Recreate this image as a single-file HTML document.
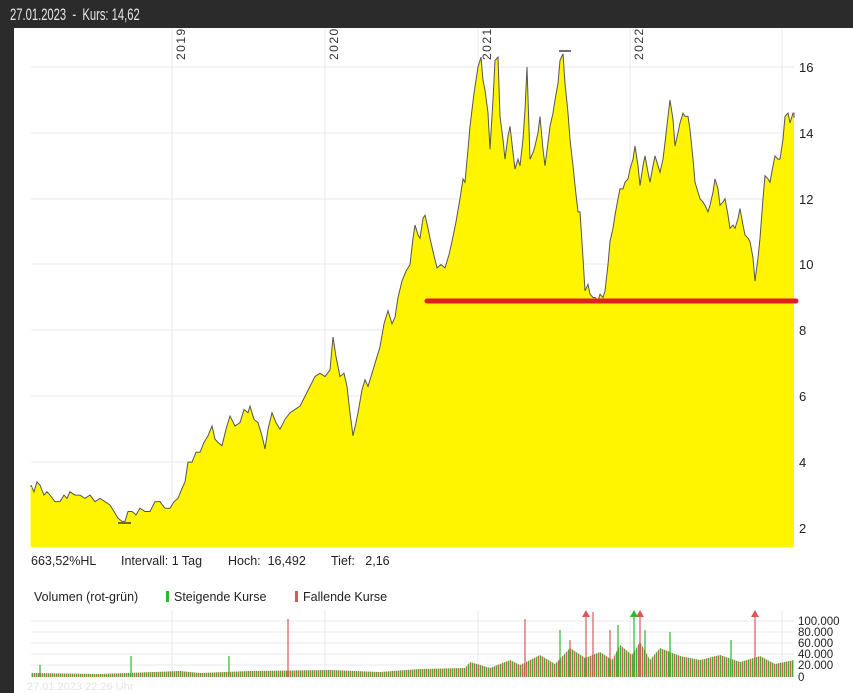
<!DOCTYPE html>
<html><head><meta charset="utf-8"><style>
html,body{margin:0;padding:0;width:853px;height:693px;overflow:hidden;background:#2b2b2b;font-family:"Liberation Sans",sans-serif}
.top{position:absolute;left:10px;top:0;height:28px;color:#e6e6e6;font-size:17px;line-height:30px;transform:scaleX(0.66);transform-origin:0 0;white-space:nowrap}
.panel{position:absolute;left:14px;top:28px;width:839px;height:665px;background:#fff}
svg{position:absolute;left:0;top:0}
</style></head><body>
<div class="top">27.01.2023&nbsp; - &nbsp;Kurs: 14,62</div>
<div class="panel"></div>
<svg width="853" height="693" viewBox="0 0 853 693" font-family="Liberation Sans, sans-serif">
<defs>
<pattern id="vp" width="4" height="10" patternUnits="userSpaceOnUse">
<rect x="0" y="0" width="1.4" height="10" fill="#2db82d"/>
<rect x="2" y="0" width="1.4" height="10" fill="#d9595b"/>
</pattern>
</defs>
<g stroke="#eaeaea" stroke-width="1">
<line x1="31" y1="67" x2="794" y2="67"/><line x1="31" y1="133" x2="794" y2="133"/><line x1="31" y1="199" x2="794" y2="199"/><line x1="31" y1="264" x2="794" y2="264"/><line x1="31" y1="330" x2="794" y2="330"/><line x1="31" y1="396" x2="794" y2="396"/><line x1="31" y1="462" x2="794" y2="462"/><line x1="31" y1="528" x2="794" y2="528"/>
<line x1="172" y1="28" x2="172" y2="547"/><line x1="325" y1="28" x2="325" y2="547"/><line x1="478" y1="28" x2="478" y2="547"/><line x1="630" y1="28" x2="630" y2="547"/><line x1="782" y1="28" x2="782" y2="547"/>
<line x1="31" y1="621" x2="794" y2="621"/><line x1="31" y1="632" x2="794" y2="632"/><line x1="31" y1="643" x2="794" y2="643"/><line x1="31" y1="654" x2="794" y2="654"/><line x1="31" y1="665" x2="794" y2="665"/>
<line x1="172" y1="610" x2="172" y2="677"/><line x1="325" y1="610" x2="325" y2="677"/><line x1="478" y1="610" x2="478" y2="677"/><line x1="630" y1="610" x2="630" y2="677"/><line x1="782" y1="610" x2="782" y2="677"/>
</g>
<g transform="matrix(1 0 0 -32.93 0 593.86)">
<polygon fill="#fff500" stroke="#555" stroke-width="1" vector-effect="non-scaling-stroke" points="31,1.4 31,3.3 34,3.1 37,3.4 40,3.3 44,3.0 47,3.1 50,3.0 55,2.8 60,2.8 64,3.0 67,2.9 70,3.1 75,3.0 80,3.0 85,2.9 90,3.0 95,2.8 100,2.9 105,2.8 110,2.7 114,2.5 118,2.3 122,2.2 125,2.2 128,2.5 132,2.5 136,2.4 140,2.6 145,2.5 150,2.5 155,2.8 160,2.8 165,2.6 170,2.6 174,2.8 178,2.9 182,3.2 185,3.4 188,4.0 192,4.0 196,4.3 200,4.3 204,4.6 208,4.8 212,5.1 215,4.7 218,4.6 222,4.5 226,5.0 230,5.4 235,5.1 240,5.2 244,5.6 248,5.5 250,5.7 254,5.3 258,5.2 262,4.8 265,4.4 268,5.0 272,5.5 276,5.2 280,5.0 285,5.3 290,5.5 295,5.6 300,5.7 305,6.0 310,6.3 315,6.6 320,6.7 325,6.6 330,6.8 333,7.8 336,7.2 340,6.6 344,6.7 347,6.3 350,5.5 353,4.8 356,5.2 358,5.5 362,6.2 365,6.5 368,6.3 372,6.7 376,7.1 380,7.5 384,8.2 388,8.6 392,8.2 395,8.4 398,9.0 402,9.5 406,9.8 410,10.0 413,10.8 415,11.2 418,10.9 420,10.8 423,11.4 425,11.5 428,11.1 430,10.8 433,10.4 437,9.9 441,10.0 445,9.9 449,10.3 452,10.7 456,11.3 460,12.0 463,12.6 465,12.5 468,13.5 470,14.2 474,15.2 478,16.0 481,16.3 483,15.6 485,15.3 488,14.6 490,13.5 493,15.0 495,16.2 498,16.3 500,14.5 503,13.8 505,13.2 508,13.9 510,14.2 513,13.4 515,12.9 518,13.2 520,13.0 523,13.8 525,14.7 527,16.0 530,13.2 533,13.4 535,13.6 538,14.0 540,14.5 543,13.5 545,13.0 548,13.7 550,14.2 553,14.6 555,15.0 558,15.5 560,16.2 563,16.4 565,15.5 568,14.6 570,13.8 573,13.0 575,12.4 578,11.6 580,11.6 583,10.2 585,9.2 588,9.4 590,9.1 593,9.0 595,9.0 598,8.9 600,9.1 603,9.0 605,9.2 608,10.0 610,10.7 613,11.1 615,11.5 618,12.0 620,12.3 623,12.3 625,12.5 628,12.6 630,12.9 633,13.2 635,13.6 638,13.0 640,12.4 643,13.0 645,13.3 648,12.8 650,12.5 653,13.0 655,13.3 658,13.0 660,12.8 663,13.2 665,13.7 668,14.5 670,15.0 673,14.4 675,13.6 678,14.0 680,14.3 683,14.6 685,14.5 688,14.5 690,14.1 693,13.2 695,12.5 698,12.2 700,12.0 703,11.9 705,11.8 708,11.6 710,11.8 713,12.2 715,12.6 718,12.3 720,11.8 723,11.9 725,12.0 728,11.5 730,11.1 733,11.2 735,11.1 738,11.4 740,11.7 743,11.2 745,10.9 748,10.8 750,10.7 753,10.2 755,9.5 758,10.2 760,10.8 763,12.0 765,12.7 768,12.6 770,12.5 773,13.0 775,13.3 778,13.2 780,13.2 783,13.8 785,14.5 788,14.6 790,14.3 793,14.6 794,14.6 794,1.4"/>
</g>
<rect x="29" y="547" width="768" height="4" fill="#fff"/>
<rect x="30.5" y="487" width="1.5" height="60" fill="#fff500"/>
<rect x="793" y="118" width="1" height="429" fill="#fff500"/>
<rect x="794" y="118" width="1.5" height="429" fill="#fff"/>
<line x1="118" y1="523" x2="131" y2="523" stroke="#222" stroke-width="1.3"/>
<line x1="559" y1="51" x2="571" y2="51" stroke="#222" stroke-width="1.3"/>
<line x1="427" y1="301" x2="796" y2="301" stroke="#e02020" stroke-width="5" stroke-linecap="round"/>
<g font-size="12" fill="#333" letter-spacing="1.5">
<text transform="translate(185,60) rotate(-90)">2019</text>
<text transform="translate(338,60) rotate(-90)">2020</text>
<text transform="translate(491,60) rotate(-90)">2021</text>
<text transform="translate(643,60) rotate(-90)">2022</text>
</g>
<g font-size="13" fill="#222">
<text x="799" y="72">16</text><text x="799" y="138">14</text><text x="799" y="204">12</text><text x="799" y="269">10</text><text x="799" y="335">8</text><text x="799" y="401">6</text><text x="799" y="467">4</text><text x="799" y="533">2</text>
</g>
<g font-size="12.5" fill="#222">
<text x="31" y="565">663,52%HL</text>
<text x="121" y="565">Intervall: 1 Tag</text>
<text x="228" y="565">Hoch:&nbsp; 16,492</text>
<text x="331" y="565">Tief:&nbsp;&nbsp; 2,16</text>
<text x="34" y="601">Volumen (rot-grün)</text>
<rect x="166" y="591" width="3" height="11" fill="#2db82d"/>
<text x="174" y="601">Steigende Kurse</text>
<rect x="295" y="591" width="3" height="11" fill="#d9595b"/>
<text x="303" y="601">Fallende Kurse</text>
</g>
<polygon fill="url(#vp)" points="31,677 31,673 100,674 180,671 200,673 250,671 330,670 380,672 420,669 465,668 470,662 490,668 510,660 520,665 540,655 555,664 570,648 585,658 600,652 612,660 620,645 632,655 640,642 650,660 660,648 680,656 700,660 720,655 740,662 760,656 775,664 794,660 794,677"/>
<g stroke-width="1.2">
<line x1="40" y1="677" x2="40" y2="665" stroke="#2db82d"/>
<line x1="131" y1="677" x2="131" y2="656" stroke="#2db82d"/>
<line x1="229" y1="677" x2="229" y2="656" stroke="#2db82d"/>
<line x1="288" y1="677" x2="288" y2="619" stroke="#d9595b"/>
<line x1="525" y1="677" x2="525" y2="619" stroke="#d9595b"/>
<line x1="586" y1="677" x2="586" y2="614" stroke="#d9595b"/>
<line x1="593" y1="677" x2="593" y2="612" stroke="#d9595b"/>
<line x1="634" y1="677" x2="634" y2="614" stroke="#2db82d"/>
<line x1="640" y1="677" x2="640" y2="614" stroke="#d9595b"/>
<line x1="755" y1="677" x2="755" y2="614" stroke="#d9595b"/>
<line x1="645" y1="677" x2="645" y2="630" stroke="#2db82d"/>
<line x1="618" y1="677" x2="618" y2="625" stroke="#2db82d"/>
<line x1="610" y1="677" x2="610" y2="630" stroke="#d9595b"/>
<line x1="560" y1="677" x2="560" y2="630" stroke="#2db82d"/>
<line x1="670" y1="677" x2="670" y2="632" stroke="#2db82d"/>
<line x1="570" y1="677" x2="570" y2="640" stroke="#d9595b"/>
<line x1="731" y1="677" x2="731" y2="640" stroke="#2db82d"/>
</g>
<g fill="#d9595b"><polygon points="582,617 586,610 590,617"/><polygon points="636,617 640,610 644,617"/><polygon points="751,617 755,610 759,617"/></g>
<polygon fill="#2db82d" points="630,617 634,610 638,617"/>
<g font-size="11.5" fill="#222">
<text x="798" y="625">100.000</text><text x="798" y="636">80.000</text><text x="798" y="647">60.000</text><text x="798" y="658">40.000</text><text x="798" y="669">20.000</text><text x="798" y="681">0</text>
</g>
<text x="27" y="690" font-size="11" fill="#e4e4e4">27.01.2023 22:26 Uhr</text>
</svg>
</body></html>
